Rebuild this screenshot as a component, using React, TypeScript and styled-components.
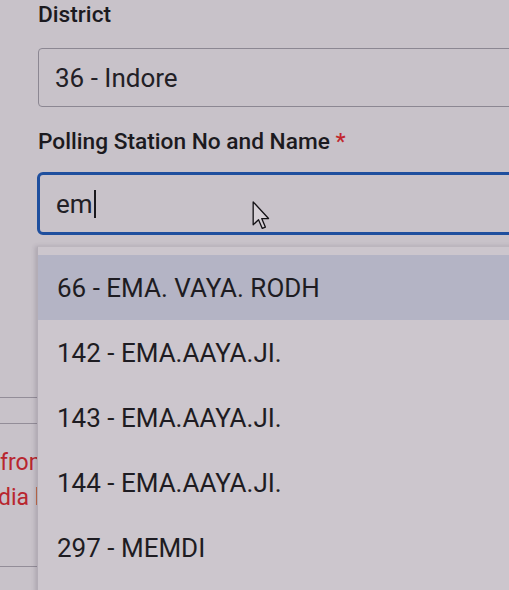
import React from 'react'
import styled, { createGlobalStyle } from 'styled-components'

const GlobalStyle = createGlobalStyle`
  html, body {
    margin: 0;
    padding: 0;
    background: #c8c2c9;
  }
  body {
    font-family: Roboto, 'Noto Sans', 'Liberation Sans', sans-serif;
    color: #1e1c22;
  }
`

interface Station {
  no: number
  name: string
}

const stations: Station[] = [
  { no: 66, name: 'EMA. VAYA. RODH' },
  { no: 142, name: 'EMA.AAYA.JI.' },
  { no: 143, name: 'EMA.AAYA.JI.' },
  { no: 144, name: 'EMA.AAYA.JI.' },
  { no: 297, name: 'MEMDI' },
]

const App: React.FC = () => {
  return (
    <>
      <GlobalStyle />
      <Page>
        <Form>
          <Label>District</Label>
          <StaticBox>36 - Indore</StaticBox>
          <Label $gap={20}>
            Polling Station No and Name <Required>*</Required>
          </Label>
          <SearchBox>
            em
            <Caret />
          </SearchBox>
        </Form>
        <Behind>
          <RuleRow />
          <NoticeLine $gap={21} $shift={0}>
            from the electoral roll
          </NoticeLine>
          <NoticeLine $shift={21}>India list</NoticeLine>
          <BottomRule />
        </Behind>
        <Pointer viewBox="0 0 12 20" width="18" height="29">
          <path
            d="M0.6 0.6 L0.6 16.4 L4.3 12.9 L6.9 18.9 L9 18 L6.5 12.1 L11.2 12.1 Z"
            fill="#d6d0d6"
            stroke="#141216"
            strokeWidth="0.9"
            strokeLinejoin="round"
          />
        </Pointer>
        <Dropdown>
          {stations.map((s, i) => (
            <Option key={s.no} $active={i === 0}>
              {s.no} - {s.name}
            </Option>
          ))}
        </Dropdown>
      </Page>
    </>
  )
}

const Page = styled.div`
  position: relative;
  width: 509px;
  height: 590px;
  overflow: hidden;
`

const Form = styled.div`
  display: flex;
  flex-direction: column;
  width: 560px;
  padding-left: 38px;
`

const Label = styled.div<{ $gap?: number }>`
  margin-top: ${(p) => p.$gap || 0}px;
  font-size: 22.7px;
  font-weight: 500;
  line-height: 30px;
  color: #1c1a20;
`

const Required = styled.span`
  color: #c2262e;
`

const StaticBox = styled.div`
  box-sizing: border-box;
  margin-top: 18px;
  height: 59px;
  display: flex;
  align-items: center;
  padding-left: 16px;
  border: 1px solid #8c8792;
  border-radius: 4px;
  font-size: 26px;
  color: #222026;
`

const SearchBox = styled.div`
  box-sizing: border-box;
  margin-top: 15px;
  margin-left: -1px;
  height: 63px;
  display: flex;
  align-items: center;
  padding-left: 16px;
  border: 3px solid #1f4f9e;
  border-radius: 6px;
  font-size: 26px;
  color: #222026;
`

const Caret = styled.span`
  display: inline-block;
  width: 2px;
  height: 28px;
  margin-left: 1px;
  background: #1a181c;
`

const Behind = styled.div`
  display: flex;
  flex-direction: column;
`

const RuleRow = styled.div`
  margin-top: 162px;
  height: 25px;
  border-top: 1px solid #938d98;
  border-bottom: 1px solid #938d98;
`

const NoticeLine = styled.div<{ $shift: number; $gap?: number }>`
  margin-top: ${(p) => p.$gap || 0}px;
  margin-left: ${(p) => -p.$shift}px;
  font-size: 23px;
  line-height: 35px;
  white-space: nowrap;
  color: #b8262f;
`

const BottomRule = styled.div`
  margin-top: 51px;
  border-top: 1px solid #938d98;
`

const Pointer = styled.svg`
  position: absolute;
  left: 252px;
  top: 201px;
`

const Dropdown = styled.div`
  position: absolute;
  left: 37px;
  right: -30px;
  top: 246px;
  bottom: -20px;
  padding-top: 8px;
  background: #ccc6cd;
  border-top: 1px solid #bcb6be;
  border-left: 1px solid #b3adb6;
  box-shadow: -2px 0 4px rgba(60, 50, 70, 0.18);
`

const Option = styled.div<{ $active: boolean }>`
  height: 65px;
  display: flex;
  align-items: center;
  padding-left: 19px;
  font-size: 26px;
  color: #1e1c22;
  background: ${(p) => (p.$active ? '#b4b4c5' : 'transparent')};
`

export default App
